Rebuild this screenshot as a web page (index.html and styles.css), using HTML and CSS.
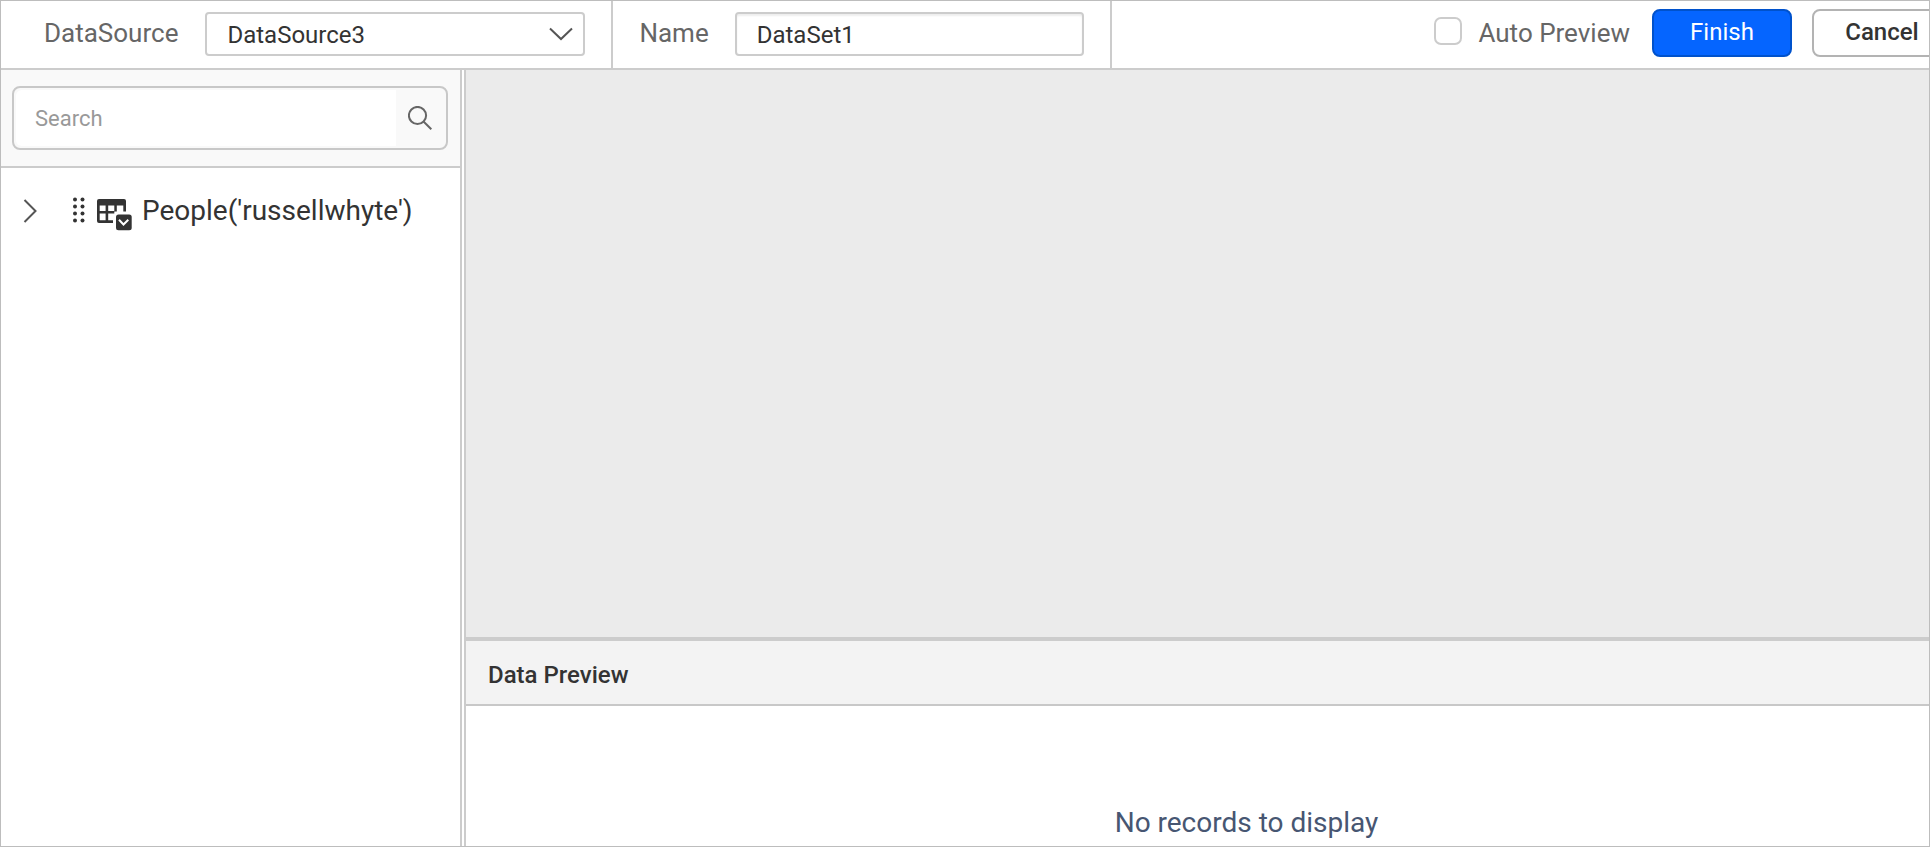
FILE: index.html
```html
<!DOCTYPE html>
<html lang="en">
<head>
<meta charset="utf-8">
<title>DataSet designer</title>
<link rel="stylesheet" href="styles.css">
</head>
<body>
<div class="designer">
  <header class="toolbar">
    <div class="field-group">
      <label class="field-label" for="source">DataSource</label>
      <div class="select-wrap">
        <select class="field select" id="source"><option>DataSource3</option></select>
        <svg class="select-arrow" viewBox="0 0 24 14" aria-hidden="true"><path d="M1 1.5 12 12 23 1.5"/></svg>
      </div>
    </div>
    <div class="field-group field-group-name">
      <label class="field-label" for="name">Name</label>
      <input class="field name-input" id="name" type="text" value="DataSet1">
    </div>
    <div class="actions">
      <input class="checkbox" id="auto" type="checkbox">
      <label class="field-label auto-label" for="auto">Auto Preview</label>
      <button class="button button-primary" type="button">Finish</button>
      <button class="button button-plain" type="button">Cancel</button>
    </div>
  </header>
  <div class="body">
    <aside class="sidebar">
      <div class="search-panel">
        <div class="search-box">
          <input class="search-input" type="text" placeholder="Search" aria-label="Search">
          <button class="search-button" type="button" aria-label="Search">
            <svg class="search-icon" viewBox="0 0 24 24" aria-hidden="true"><circle cx="9.5" cy="9.5" r="8.6"/><path d="M15.5 15.5 23.3 23.3"/></svg>
          </button>
        </div>
      </div>
      <div class="tree-row">
        <button class="expander" type="button" aria-label="Expand">
          <svg class="expander-icon" viewBox="0 0 14 24" aria-hidden="true"><path d="M1.5 1 12.5 12 1.5 23"/></svg>
        </button>
        <svg class="grip" viewBox="0 0 12 26" aria-hidden="true">
          <circle cx="2" cy="2.5" r="2"/><circle cx="9.5" cy="2.5" r="2"/>
          <circle cx="2" cy="9.5" r="2"/><circle cx="9.5" cy="9.5" r="2"/>
          <circle cx="2" cy="16.5" r="2"/><circle cx="9.5" cy="16.5" r="2"/>
          <circle cx="2" cy="23.500" r="2"/><circle cx="9.5" cy="23.500" r="2"/>
        </svg>
        <svg class="table-icon" viewBox="0 0 35 32" aria-hidden="true">
          <path fill-rule="evenodd" d="M2 0H27Q29 0 29 2V12.500H26.300V6.600H19.800V12.500H17.300V14.500H11.200V21.300H16V24H2Q0 24 0 22V2Q0 0 2 0ZM2.700 6.600V12H8.600V6.600ZM11.200 6.600V12H17.300V6.600ZM2.700 14.500V21.300H8.600V14.500Z"/>
          <rect x="19" y="15.500" width="15.700" height="15.700" rx="2.500"/>
          <path class="table-check" d="M22 20.800 26.500 25.500 31.300 20.800"/>
        </svg>
        <span class="tree-label">People('russellwhyte')</span>
      </div>
    </aside>
    <main class="main">
      <div class="canvas"></div>
      <section class="preview">
        <h2 class="preview-title">Data Preview</h2>
        <p class="preview-empty">No records to display</p>
      </section>
    </main>
  </div>
</div>
</body>
</html>
```
FILE: styles.css
```css
* {
  box-sizing: border-box;
}

body {
  margin: 0;
  font-family: Roboto, "Liberation Sans", sans-serif;
  color: #333;
}

input,
select,
button {
  margin: 0;
  font-family: inherit;
  color: inherit;
}

svg {
  display: block;
  flex: none;
}

.designer {
  display: flex;
  flex-direction: column;
  height: 100vh;
  overflow: hidden;
  border: 1px solid #bdbdbd;
  background: #fff;
}

.toolbar {
  display: flex;
  flex: none;
  border-bottom: 2px solid #ccc;
}

.field-group {
  display: flex;
  align-items: center;
  gap: 27px;
  padding: 11px 26px 12px 43px;
  border-right: 2px solid #ccc;
}

.field-group-name {
  gap: 26px;
  padding-left: 26px;
}

.field-label {
  padding-bottom: 2px;
  font-size: 26px;
  line-height: 40px;
  color: #666;
  white-space: nowrap;
}

.field {
  display: block;
  height: 44px;
  padding: 2px 20px 0;
  border: 2px solid #ccc;
  border-radius: 4px;
  background: #fff;
  font-size: 24px;
  color: #333;
}

.select-wrap {
  position: relative;
}

.select {
  width: 380px;
  appearance: none;
}

.select-arrow {
  position: absolute;
  top: 15px;
  right: 12px;
  width: 24px;
  height: 14px;
  fill: none;
  stroke: #555;
  stroke-width: 2;
  pointer-events: none;
}

.name-input {
  width: 349px;
  box-shadow: inset 0 2px 2px #eee;
}

.actions {
  display: flex;
  align-items: center;
  margin-left: auto;
  margin-right: -23px;
  padding-bottom: 3px;
}

.checkbox {
  width: 28px;
  height: 28px;
  margin: 0 16px 4px 0;
  appearance: none;
  border: 2px solid #ccc;
  border-radius: 7px;
  background: #fff;
}

.auto-label {
  margin-right: 22px;
  padding-bottom: 0;
}

.button {
  width: 140px;
  height: 48px;
  padding: 0 0 2px;
  border: 2px solid #b3b3b3;
  border-radius: 8px;
  background: #fff;
  font-size: 24px;
  font-weight: 500;
}

.button-primary {
  margin-right: 20px;
  border-color: #0052cc;
  background: #0565ff;
  color: #fff;
  font-weight: 400;
}

.body {
  display: flex;
  flex: 1;
  min-height: 0;
}

.sidebar {
  flex: none;
  width: 461px;
  border-right: 2px solid #ccc;
}

.search-panel {
  padding: 16px 12px 16px 11px;
  border-bottom: 2px solid #ccc;
  background: #f9f9f9;
}

.search-box {
  display: flex;
  height: 64px;
  padding: 2px;
  border: 2px solid #c8c8c8;
  border-radius: 8px;
}

.search-input {
  flex: 1;
  min-width: 0;
  padding: 0 19px;
  border: 0;
  border-radius: 6px 0 0 6px;
  background: #fff;
  font-size: 22px;
}

.search-input::placeholder {
  color: #999;
}

.search-button {
  display: flex;
  align-items: center;
  padding: 0 12px;
  border: 0;
  background: none;
}

.search-icon {
  width: 24px;
  height: 24px;
  fill: none;
  stroke: #666;
  stroke-width: 2;
}

.tree-row {
  display: flex;
  align-items: center;
  padding: 23px 22px 0;
}

.expander {
  padding: 0;
  border: 0;
  margin-right: 36px;
  background: none;
}

.expander-icon {
  width: 14px;
  height: 24px;
  fill: none;
  stroke: #555;
  stroke-width: 2;
}

.grip {
  width: 12px;
  height: 26px;
  margin: 0 12px 2px 0;
  fill: #333;
}

.table-icon {
  width: 35px;
  height: 32px;
  margin: 8px 10px 0 0;
  fill: #333;
}

.table-check {
  fill: none;
  stroke: #fff;
  stroke-width: 2;
}

.tree-label {
  font-size: 28px;
  line-height: 40px;
  white-space: nowrap;
}

.main {
  display: flex;
  flex: 1;
  flex-direction: column;
  min-width: 0;
  margin-left: 2px;
  border-left: 2px solid #ccc;
}

.canvas {
  flex: 1;
  background: #ebebeb;
}

.preview {
  flex: none;
  border-top: 4px solid #ccc;
}

.preview-title {
  margin: 0;
  padding: 18px 22px 13px;
  border-bottom: 2px solid #c8c8c8;
  background: #f3f3f3;
  font-size: 24px;
  line-height: 32px;
  font-weight: 500;
}

.preview-empty {
  margin: 0;
  padding: 97px 0 3px 98px;
  font-size: 28px;
  line-height: 40px;
  color: #475672;
  text-align: center;
}
```
